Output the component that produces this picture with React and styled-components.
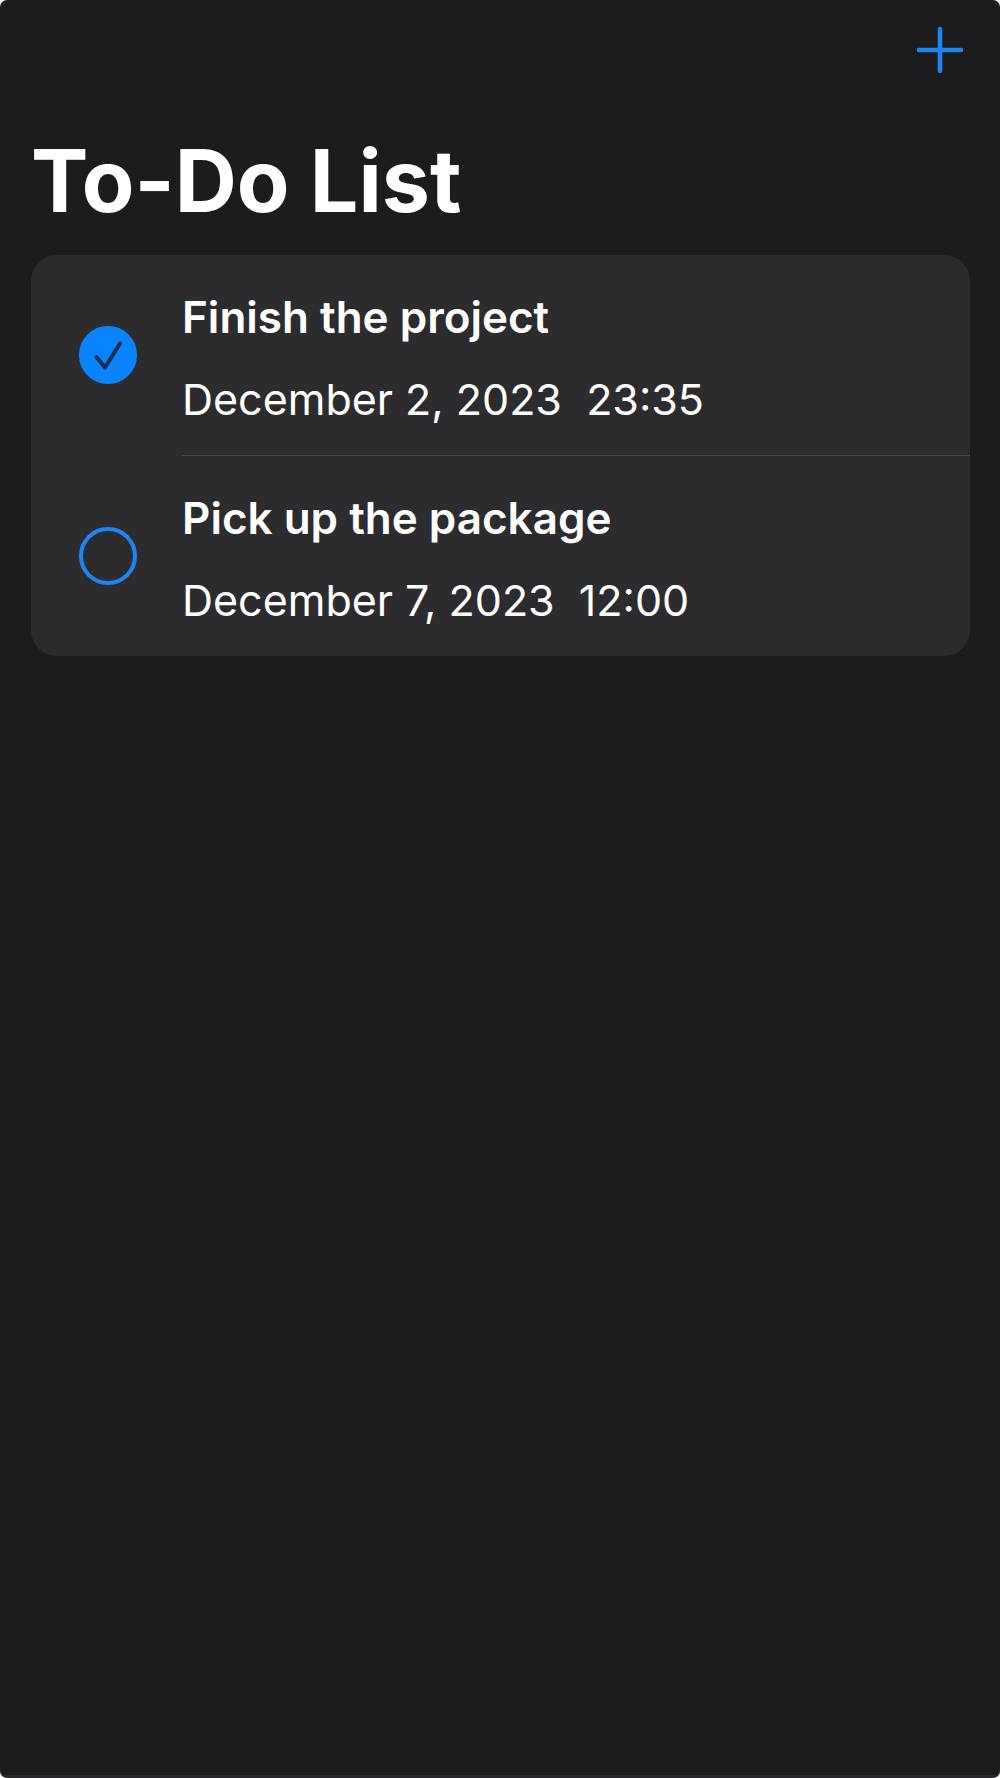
import React from "react";
import styled, { createGlobalStyle } from "styled-components";

const initialTasks = [
  {
    id: "project",
    title: "Finish the project",
    date: "December 2, 2023",
    time: "23:35",
    done: true,
  },
  {
    id: "package",
    title: "Pick up the package",
    date: "December 7, 2023",
    time: "12:00",
    done: false,
  },
];

function Task({ task, onToggle }) {
  return (
    <Row>
      <CheckArea>
        <Check
          id={task.id}
          type="checkbox"
          checked={task.done}
          onChange={() => onToggle(task.id)}
        />
        {task.done && (
          <Tick viewBox="0 0 58 58" aria-hidden="true">
            <path d="M17.5 31 L26 41.5 L41 17.5" />
          </Tick>
        )}
      </CheckArea>
      <Details>
        <TaskTitle htmlFor={task.id}>{task.title}</TaskTitle>
        <Due>
          {task.date}&nbsp; {task.time}
        </Due>
      </Details>
    </Row>
  );
}

function App() {
  const [tasks, setTasks] = React.useState(initialTasks);

  const toggle = (id) =>
    setTasks(tasks.map((t) => (t.id === id ? { ...t, done: !t.done } : t)));

  return (
    <>
      <GlobalStyle />
      <Screen>
        <Toolbar>
          <AddButton type="button" aria-label="Add task">
            <svg viewBox="0 0 48 48" aria-hidden="true">
              <path d="M24 3V45M3 24H45" />
            </svg>
          </AddButton>
        </Toolbar>
        <Heading>To-Do List</Heading>
        <List>
          {tasks.map((task) => (
            <Task key={task.id} task={task} onToggle={toggle} />
          ))}
        </List>
      </Screen>
    </>
  );
}

export default App;

const GlobalStyle = createGlobalStyle`
  * {
    box-sizing: border-box;
  }

  body {
    margin: 0;
    background: #fff;
    color: #fff;
    font-family: Inter, "Liberation Sans", sans-serif;
  }
`;

const Screen = styled.main`
  min-height: 100vh;
  padding: 0 30px 0 31px;
  background: #1c1c1e;
  border-bottom: 3px solid #29282d;
  border-radius: 7px;
`;

const Toolbar = styled.header`
  display: flex;
  align-items: center;
  justify-content: flex-end;
  height: 100px;
  padding-right: 6px;
`;

const AddButton = styled.button`
  width: 48px;
  height: 48px;
  padding: 0;
  border: 0;
  background: none;
  cursor: pointer;

  svg {
    display: block;
    fill: none;
    stroke: #1c84f3;
    stroke-width: 4.5;
    stroke-linecap: round;
  }
`;

const Heading = styled.h1`
  margin: 29px 0 22px;
  font-size: 86px;
  font-weight: 700;
  line-height: 104px;
`;

const List = styled.ul`
  margin: 0;
  padding: 0;
  list-style: none;
  background: #2c2c2e;
  border-radius: 26px;
`;

const Row = styled.li`
  display: flex;
  align-items: stretch;
`;

const CheckArea = styled.div`
  position: relative;
  display: flex;
  align-items: center;
  padding: 0 45px 0 48px;
`;

const Check = styled.input`
  appearance: none;
  width: 58px;
  height: 58px;
  margin: 0;
  border: 4px solid #1c84f3;
  border-radius: 50%;
  cursor: pointer;

  &:checked {
    border-color: #0a84ff;
    background: #0a84ff;
  }
`;

const Tick = styled.svg`
  position: absolute;
  left: 48px;
  width: 58px;
  height: 58px;
  fill: none;
  stroke: #17304f;
  stroke-width: 4;
  stroke-linecap: round;
  stroke-linejoin: round;
  pointer-events: none;
`;

const Details = styled.div`
  flex: 1;
  display: flex;
  flex-direction: column;
  gap: 28px;
  padding: 35px 0 29px;

  ${Row} + ${Row} & {
    border-top: 1px solid #454547;
  }
`;

const TaskTitle = styled.label`
  font-size: 44px;
  font-weight: 600;
  line-height: 54px;
`;

const Due = styled.span`
  font-size: 43px;
  font-weight: 400;
  line-height: 54px;
`;
